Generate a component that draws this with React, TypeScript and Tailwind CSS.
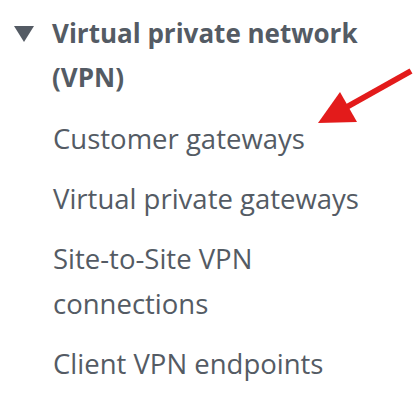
import React from "react";

export default function App() {
  const items: string[] = [
    "Customer gateways",
    "Virtual private gateways",
    "Site-to-Site VPN connections",
    "Client VPN endpoints",
  ];
  return (
    <div
      className="relative w-[418px] h-[404px] bg-white overflow-hidden text-[#545b64]"
      style={{ fontFamily: '"Open Sans", "Noto Sans", sans-serif' }}
    >
      <div className="pt-[11px] pl-[14px]">
        <div className="flex items-start">
          <svg width="20" height="17" viewBox="0 0 20 17" className="mt-[15px] shrink-0">
            <polygon points="0,0 20,0 10,16" fill="#545b64" />
          </svg>
          <div className="ml-[18px] w-[330px] text-[26px] leading-[44px] font-bold">
            Virtual private network (VPN)
          </div>
        </div>
        <ul className="pl-[39px] mt-[17px] flex flex-col gap-[15px] w-[365px]">
          {items.map((t) => (
            <li key={t} className="text-[27.5px] leading-[45px]">
              {t}
            </li>
          ))}
        </ul>
      </div>
      <svg
        className="absolute left-0 top-0 pointer-events-none"
        width="418"
        height="404"
        viewBox="0 0 418 404"
      >
        <line x1="411" y1="71" x2="345" y2="108" stroke="#e31b1b" strokeWidth="6" />
        <polygon points="318,123 340,92 357,122" fill="#e31b1b" />
      </svg>
    </div>
  );
}
